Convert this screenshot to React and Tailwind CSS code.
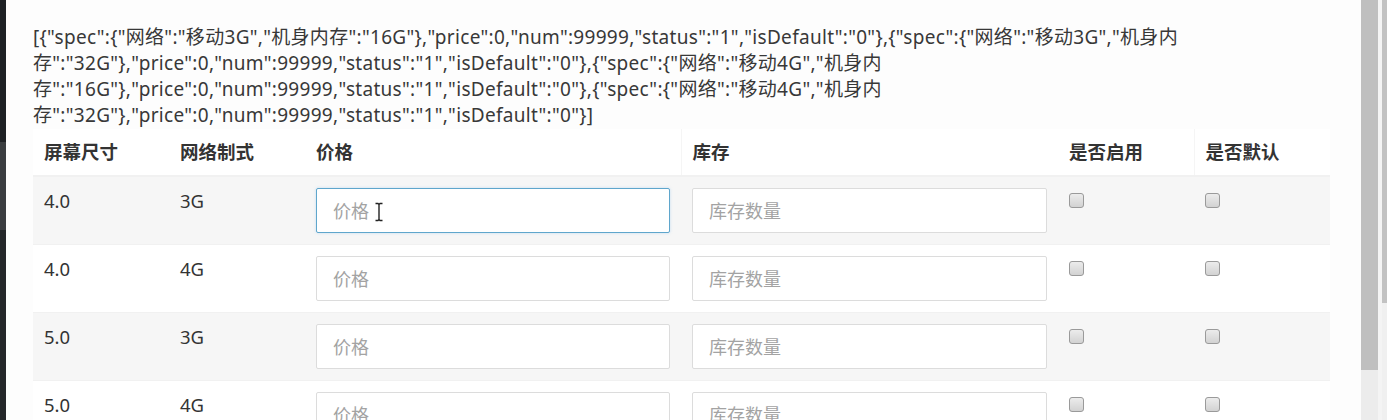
import React from "react";

const FONT = { fontFamily: '"Noto Sans", "Noto Sans CJK SC", sans-serif' };

const lines = [
  '[{"spec":{"网络":"移动3G","机身内存":"16G"},"price":0,"num":99999,"status":"1","isDefault":"0"},{"spec":{"网络":"移动3G","机身内',
  '存":"32G"},"price":0,"num":99999,"status":"1","isDefault":"0"},{"spec":{"网络":"移动4G","机身内',
  '存":"16G"},"price":0,"num":99999,"status":"1","isDefault":"0"},{"spec":{"网络":"移动4G","机身内',
  '存":"32G"},"price":0,"num":99999,"status":"1","isDefault":"0"}]',
];

const rows = [
  { size: "4.0", net: "3G", focus: true },
  { size: "4.0", net: "4G" },
  { size: "5.0", net: "3G" },
  { size: "5.0", net: "4G" },
];

function Checkbox() {
  return (
    <div className="mt-[5px] h-[15px] w-[15px] rounded-[3px] border border-[#9a9a9a] bg-gradient-to-b from-[#ececec] to-[#d2d2d2]" />
  );
}

function Input({ placeholder, focus }) {
  return (
    <div className="relative">
      <input
        readOnly
        placeholder={placeholder}
        className={
          "block h-[45px] w-full rounded-[2px] border bg-white px-[16px] text-[18px] outline-none placeholder:text-[#a3a3a3] " +
          (focus
            ? "border-[#5fa6cc] shadow-[0_0_3px_rgba(102,175,233,0.35)]"
            : "border-[#dcdcdc]")
        }
        style={FONT}
      />
      {focus && (
        <svg
          className="pointer-events-none absolute left-[58px] top-[14px]"
          width="10"
          height="20"
          viewBox="0 0 10 20"
        >
          <path
            d="M1.5 1.5h2.5l1 1 1-1h2.5M5 2.5v15M1.5 18.5h2.5l1-1 1 1h2.5"
            fill="none"
            stroke="#222"
            strokeWidth="1.4"
          />
        </svg>
      )}
    </div>
  );
}

export default function App() {
  return (
    <div className="flex h-[420px] w-[1387px] overflow-hidden bg-[#fdfdfd]" style={FONT}>
      <div className="flex w-[6px] flex-col">
        <div className="h-[142px] bg-[#1e2124]" />
        <div className="h-[88px] bg-[#3a3d40]" />
        <div className="flex-1 bg-[#24272a]" />
      </div>
      <div className="flex-1 pl-[27px] pt-[24px] text-[#333]">
        <div className="text-[19px] leading-[26px] tracking-[0.3px] text-[#383838]">
          {lines.map((l, i) => (
            <div key={i} className="whitespace-nowrap">
              {l}
            </div>
          ))}
        </div>
        <table className="mt-[1px] table-fixed border-collapse text-[18.5px] leading-[26px]">
          <colgroup>
            <col className="w-[136px]" />
            <col className="w-[136px]" />
            <col className="w-[376px]" />
            <col className="w-[377px]" />
            <col className="w-[136px]" />
            <col className="w-[136px]" />
          </colgroup>
          <thead>
            <tr className="border-b-2 border-[#f1f1f1] bg-white">
              {["屏幕尺寸", "网络制式", "价格", "库存", "是否启用", "是否默认"].map((h, i) => (
                <th
                  key={h}
                  className={
                    "px-[11px] py-[10px] text-left align-bottom font-bold text-[#333] " +
                    (i === 3 || i === 5 ? "border-l border-[#f5f5f5]" : "")
                  }
                >
                  {h}
                </th>
              ))}
            </tr>
          </thead>
          <tbody>
            {rows.map((r, idx) => (
              <tr
                key={idx}
                className={
                  "border-t border-[#f1f1f1] " + (idx % 2 === 0 ? "bg-[#f6f6f6]" : "bg-white")
                }
              >
                <td className="px-[11px] py-[11px] align-top text-[#333]">{r.size}</td>
                <td className="px-[11px] py-[11px] align-top text-[#333]">{r.net}</td>
                <td className="px-[11px] py-[11px] align-top">
                  <Input placeholder="价格" focus={r.focus} />
                </td>
                <td className="px-[11px] py-[11px] align-top">
                  <Input placeholder="库存数量" />
                </td>
                <td className="px-[11px] py-[11px] align-top">
                  <Checkbox />
                </td>
                <td className="px-[11px] py-[11px] align-top">
                  <Checkbox />
                </td>
              </tr>
            ))}
          </tbody>
        </table>
      </div>
      <div className="flex w-[26px]">
        <div className="flex w-[17px] flex-col">
          <div className="h-[370px] bg-[#bfbfbf]" />
          <div className="flex-1 bg-[#ececec]" />
        </div>
        <div className="w-[4px] bg-[#f4f4f4]" />
        <div className="flex w-[5px] flex-col">
          <div className="h-[303px] bg-[#c2c2c2]" />
          <div className="flex-1 bg-[#f0f0f0]" />
        </div>
      </div>
    </div>
  );
}
